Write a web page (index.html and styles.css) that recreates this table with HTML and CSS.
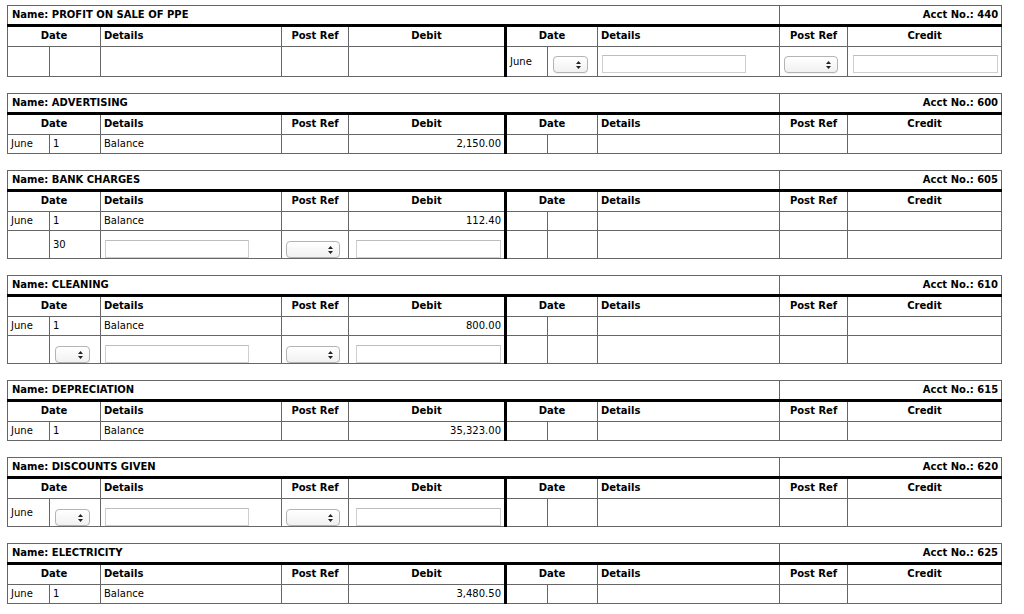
FILE: index.html
```html
<!DOCTYPE html>
<html>
<head>
<meta charset="utf-8">
<link rel="stylesheet" href="styles.css">
</head>
<body>
<div class="page">

<table class="ledger">
<colgroup><col class="w-m"><col class="w-d"><col class="w-det"><col class="w-pr"><col class="w-amt"><col class="w-m"><col class="w-d2"><col class="w-det2"><col class="w-pr2"><col class="w-amt2"></colgroup>
<tr class="name-row"><td colspan="8" class="name">Name: PROFIT ON SALE OF PPE</td><td colspan="2" class="acct">Acct No.: 440</td></tr>
<tr class="head"><th colspan="2">Date</th><th class="l">Details</th><th>Post Ref</th><th class="split">Debit</th><th colspan="2">Date</th><th class="l">Details</th><th>Post Ref</th><th>Credit</th></tr>
<tr class="in-row tall"><td></td><td></td><td></td><td></td><td class="split"></td><td>June</td><td><span class="sel day"><svg viewBox="0 0 5 8"><path d="M2.5 0L5 3H0Z M2.5 8L0 5H5Z"/></svg></span></td><td><span class="txt det"></span></td><td><span class="sel pr"><svg viewBox="0 0 5 8"><path d="M2.5 0L5 3H0Z M2.5 8L0 5H5Z"/></svg></span></td><td class="r"><span class="txt amt"></span></td></tr>
</table>

<table class="ledger">
<colgroup><col class="w-m"><col class="w-d"><col class="w-det"><col class="w-pr"><col class="w-amt"><col class="w-m"><col class="w-d2"><col class="w-det2"><col class="w-pr2"><col class="w-amt2"></colgroup>
<tr class="name-row"><td colspan="8" class="name">Name: ADVERTISING</td><td colspan="2" class="acct">Acct No.: 600</td></tr>
<tr class="head"><th colspan="2">Date</th><th class="l">Details</th><th>Post Ref</th><th class="split">Debit</th><th colspan="2">Date</th><th class="l">Details</th><th>Post Ref</th><th>Credit</th></tr>
<tr class="tx-row"><td>June</td><td>1</td><td>Balance</td><td></td><td class="split r">2,150.00</td><td></td><td></td><td></td><td></td><td></td></tr>
</table>

<table class="ledger">
<colgroup><col class="w-m"><col class="w-d"><col class="w-det"><col class="w-pr"><col class="w-amt"><col class="w-m"><col class="w-d2"><col class="w-det2"><col class="w-pr2"><col class="w-amt2"></colgroup>
<tr class="name-row"><td colspan="8" class="name">Name: BANK CHARGES</td><td colspan="2" class="acct">Acct No.: 605</td></tr>
<tr class="head"><th colspan="2">Date</th><th class="l">Details</th><th>Post Ref</th><th class="split">Debit</th><th colspan="2">Date</th><th class="l">Details</th><th>Post Ref</th><th>Credit</th></tr>
<tr class="tx-row"><td>June</td><td>1</td><td>Balance</td><td></td><td class="split r">112.40</td><td></td><td></td><td></td><td></td><td></td></tr>
<tr class="in-row"><td></td><td>30</td><td><span class="txt det"></span></td><td><span class="sel pr"><svg viewBox="0 0 5 8"><path d="M2.5 0L5 3H0Z M2.5 8L0 5H5Z"/></svg></span></td><td class="split r"><span class="txt amt"></span></td><td></td><td></td><td></td><td></td><td></td></tr>
</table>

<table class="ledger">
<colgroup><col class="w-m"><col class="w-d"><col class="w-det"><col class="w-pr"><col class="w-amt"><col class="w-m"><col class="w-d2"><col class="w-det2"><col class="w-pr2"><col class="w-amt2"></colgroup>
<tr class="name-row"><td colspan="8" class="name">Name: CLEANING</td><td colspan="2" class="acct">Acct No.: 610</td></tr>
<tr class="head"><th colspan="2">Date</th><th class="l">Details</th><th>Post Ref</th><th class="split">Debit</th><th colspan="2">Date</th><th class="l">Details</th><th>Post Ref</th><th>Credit</th></tr>
<tr class="tx-row"><td>June</td><td>1</td><td>Balance</td><td></td><td class="split r">800.00</td><td></td><td></td><td></td><td></td><td></td></tr>
<tr class="in-row"><td></td><td><span class="sel day"><svg viewBox="0 0 5 8"><path d="M2.5 0L5 3H0Z M2.5 8L0 5H5Z"/></svg></span></td><td><span class="txt det"></span></td><td><span class="sel pr"><svg viewBox="0 0 5 8"><path d="M2.5 0L5 3H0Z M2.5 8L0 5H5Z"/></svg></span></td><td class="split r"><span class="txt amt"></span></td><td></td><td></td><td></td><td></td><td></td></tr>
</table>

<table class="ledger">
<colgroup><col class="w-m"><col class="w-d"><col class="w-det"><col class="w-pr"><col class="w-amt"><col class="w-m"><col class="w-d2"><col class="w-det2"><col class="w-pr2"><col class="w-amt2"></colgroup>
<tr class="name-row"><td colspan="8" class="name">Name: DEPRECIATION</td><td colspan="2" class="acct">Acct No.: 615</td></tr>
<tr class="head"><th colspan="2">Date</th><th class="l">Details</th><th>Post Ref</th><th class="split">Debit</th><th colspan="2">Date</th><th class="l">Details</th><th>Post Ref</th><th>Credit</th></tr>
<tr class="tx-row"><td>June</td><td>1</td><td>Balance</td><td></td><td class="split r">35,323.00</td><td></td><td></td><td></td><td></td><td></td></tr>
</table>

<table class="ledger">
<colgroup><col class="w-m"><col class="w-d"><col class="w-det"><col class="w-pr"><col class="w-amt"><col class="w-m"><col class="w-d2"><col class="w-det2"><col class="w-pr2"><col class="w-amt2"></colgroup>
<tr class="name-row"><td colspan="8" class="name">Name: DISCOUNTS GIVEN</td><td colspan="2" class="acct">Acct No.: 620</td></tr>
<tr class="head"><th colspan="2">Date</th><th class="l">Details</th><th>Post Ref</th><th class="split">Debit</th><th colspan="2">Date</th><th class="l">Details</th><th>Post Ref</th><th>Credit</th></tr>
<tr class="in-row"><td>June</td><td><span class="sel day"><svg viewBox="0 0 5 8"><path d="M2.5 0L5 3H0Z M2.5 8L0 5H5Z"/></svg></span></td><td><span class="txt det"></span></td><td><span class="sel pr"><svg viewBox="0 0 5 8"><path d="M2.5 0L5 3H0Z M2.5 8L0 5H5Z"/></svg></span></td><td class="split r"><span class="txt amt"></span></td><td></td><td></td><td></td><td></td><td></td></tr>
</table>

<table class="ledger">
<colgroup><col class="w-m"><col class="w-d"><col class="w-det"><col class="w-pr"><col class="w-amt"><col class="w-m"><col class="w-d2"><col class="w-det2"><col class="w-pr2"><col class="w-amt2"></colgroup>
<tr class="name-row"><td colspan="8" class="name">Name: ELECTRICITY</td><td colspan="2" class="acct">Acct No.: 625</td></tr>
<tr class="head"><th colspan="2">Date</th><th class="l">Details</th><th>Post Ref</th><th class="split">Debit</th><th colspan="2">Date</th><th class="l">Details</th><th>Post Ref</th><th>Credit</th></tr>
<tr class="tx-row"><td>June</td><td>1</td><td>Balance</td><td></td><td class="split r">3,480.50</td><td></td><td></td><td></td><td></td><td></td></tr>
</table>

</div>
</body>
</html>
```

FILE: styles.css
```css
html, body {
  margin: 0;
  padding: 0;
  background: #fff;
}
body {
  font-family: "DejaVu Sans", Verdana, sans-serif;
  font-size: 10px;
  color: #000;
}
.page {
  padding: 5px 0 0 7px;
}
.ledger {
  border-collapse: collapse;
  table-layout: fixed;
  width: 994px;
  margin-bottom: 16px;
  border: 1px solid #666;
}
.ledger td, .ledger th {
  border: 1px solid #666;
  padding: 2px 3px;
  line-height: 14px;
  white-space: nowrap;
  overflow: hidden;
  text-align: left;
  font-weight: normal;
}
.w-m { width: 42px; }
.w-d { width: 51px; }
.w-det { width: 181px; }
.w-pr { width: 67px; }
.w-amt { width: 157px; }
.w-d2 { width: 50px; }
.w-det2 { width: 182px; }
.w-pr2 { width: 68px; }
.w-amt2 { width: 154px; }

.name-row td {
  border-bottom: 3px solid #000;
  font-weight: bold;
  padding: 2px 4px;
}
.name-row .acct {
  text-align: right;
  padding-right: 3px;
}
.head th {
  font-weight: bold;
  text-align: center;
  padding: 2px 3px 3px;
}
.head th.l {
  text-align: left;
}
.ledger .split {
  border-right: 3px solid #000;
}
.ledger td.r {
  text-align: right;
}
.in-row td {
  height: 27px;
  padding: 0 3px;
  vertical-align: middle;
}
.in-row.tall td {
  height: 29px;
}
.txt, .sel {
  display: inline-block;
  vertical-align: top;
  box-sizing: border-box;
  margin-top: 9px;
}
.in-row.tall .txt, .in-row.tall .sel {
  margin-top: 8px;
  margin-bottom: 3px;
}
.txt {
  height: 18px;
  border: 1px solid #cfcfcf;
  border-top-color: #bdbdbd;
  background: #fff;
  margin-left: 1px;
}
.txt.det { width: 144px; }
.txt.amt { width: 145px; margin-left: 0; }
.sel {
  position: relative;
  height: 17px;
  border: 1px solid #b4b4b4;
  border-radius: 4px;
  background: linear-gradient(#ffffff, #f1f1f1);
  box-shadow: 0 1px 0 rgba(0,0,0,0.05);
  margin-left: 1px;
}
.sel.pr { width: 54px; }
.sel.day { width: 35px; margin-left: 2px; }
.sel svg {
  position: absolute;
  right: 6px;
  top: 4px;
  width: 5px;
  height: 8px;
  fill: #222;
}
```
